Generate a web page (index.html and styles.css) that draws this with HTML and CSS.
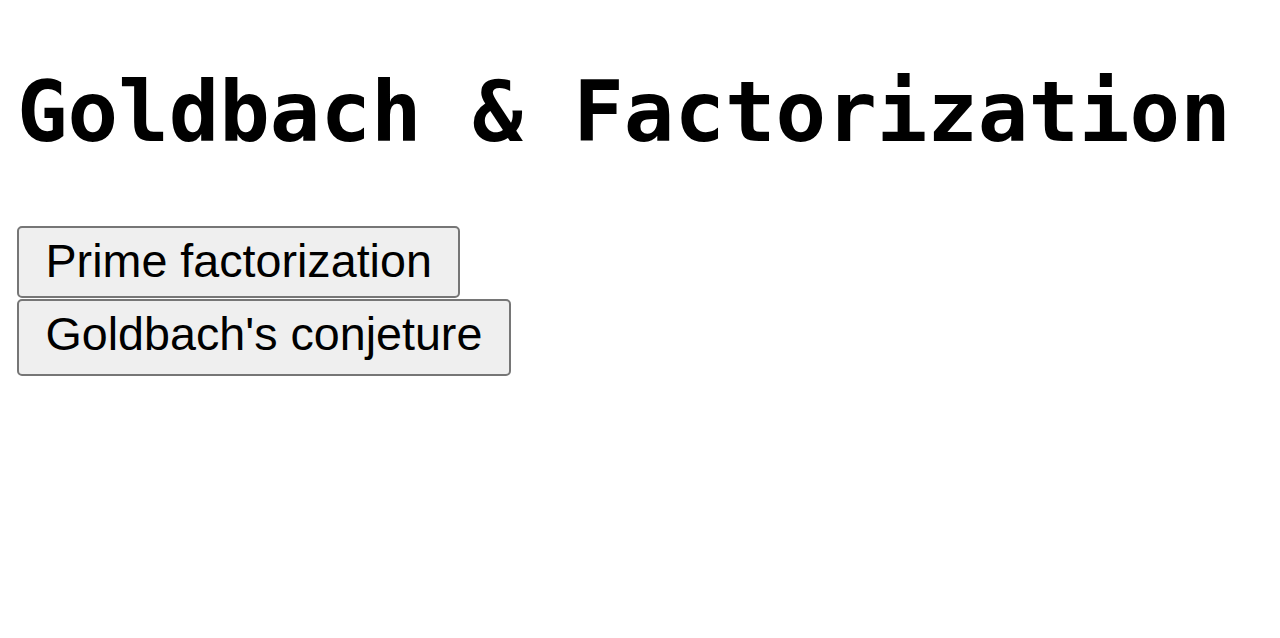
FILE: index.html
```html
<!DOCTYPE html>
<html>
<head>
<meta charset="utf-8">
<link rel="stylesheet" href="styles.css">
</head>
<body>
<div class="page">
  <h1 class="title">Goldbach &amp; Factorization</h1>
  <div class="actions">
    <button class="btn">Prime factorization</button>
    <button class="btn btn-tall">Goldbach's conjeture</button>
  </div>
</div>
</body>
</html>
```

FILE: styles.css
```css
html, body {
  margin: 0;
  padding: 0;
  background: #ffffff;
}
.page {
  padding: 0 0 0 17px;
}
.title {
  font-family: "DejaVu Sans Mono", monospace;
  font-weight: bold;
  font-size: 84px;
  line-height: 1.164;
  margin: 64px 0 0 0;
  color: #000;
}
.actions {
  display: flex;
  flex-direction: column;
  align-items: flex-start;
  gap: 1px;
  margin-top: 64px;
}
.btn {
  font-family: "Liberation Sans", Arial, sans-serif;
  font-size: 46.67px;
  line-height: 1.15;
  color: #000;
  background: #efefef;
  border: 2px solid #767676;
  border-radius: 5px;
  padding: 7px 26.5px 8px;
  margin: 0;
}
.btn-tall {
  padding-bottom: 12px;
}
```
